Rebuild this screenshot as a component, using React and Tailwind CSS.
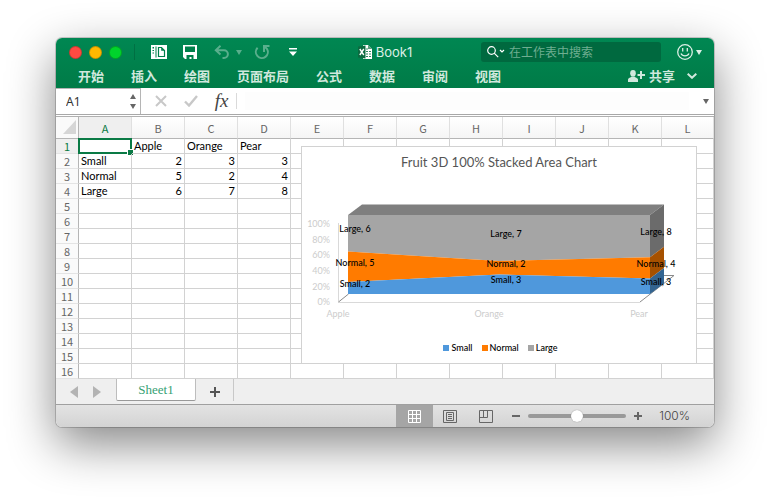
const COLUMNS = ["A", "B", "C", "D", "E", "F", "G", "H", "I", "J", "K", "L"];
const ROWS = Array.from({ length: 16 }, (_, i) => i + 1);
const DATA = {
  1: ["", "Apple", "Orange", "Pear"],
  2: ["Small", 2, 3, 3],
  3: ["Normal", 5, 2, 4],
  4: ["Large", 6, 7, 8],
};
const TABS = ["开始", "插入", "绘图", "页面布局", "公式", "数据", "审阅", "视图"];

function Light({ label, className }) {
  return (
    <button aria-label={label} className={"size-[13px] rounded-full border border-black/20 " + className} />
  );
}

function Caret({ className }) {
  return (
    <svg viewBox="0 0 6 5" className={"h-[5px] w-[6px] " + className} fill="currentColor">
      <path d="M0 0h6L3 5z" />
    </svg>
  );
}

function TitleBar() {
  return (
    <div className="grid h-7 grid-cols-[1fr_auto_1fr] items-center">
      <div className="flex items-center pl-[13px]">
        <div className="flex gap-[7px]">
          <Light label="关闭" className="bg-[#ff4a42]" />
          <Light label="最小化" className="bg-[#ffb800]" />
          <Light label="缩放" className="bg-[#00d42c]" />
        </div>
        <span className="ml-3 h-4 w-px bg-black/15" />
        <button aria-label="新建" className="ml-4">
          <svg viewBox="0 0 16 14" className="h-[14px] w-4">
            <path d="M0 0h16v14H0z" fill="#fff" />
            <path d="M1.500 2H3v1.500H1.500zM1.500 5H3v1H1.500zM1.500 7.500H3v1H1.500zM4.500 1.500h1v11h-1z" fill="#00804b" />
            <path d="M7.500 2.500v9h6V5.500l-3-3z" fill="none" stroke="#00804b" strokeWidth="1.200" />
            <path d="M10.200 2.500v3.300h3.300z" fill="#00804b" />
          </svg>
        </button>
        <button aria-label="保存" className="ml-4">
          <svg viewBox="0 0 14 14" className="size-[14px]">
            <path d="M0 0h14v14H2l-2-2z" fill="#fff" />
            <path d="M2 1.500h10v5.500H2zM3.500 10h7v4h-2v-2h-2v2h-3z" fill="#00804b" />
          </svg>
        </button>
        <button aria-label="撤销" className="ml-[17px] text-white/35">
          <svg viewBox="0 0 16 14" className="h-[14px] w-4" fill="none" stroke="currentColor" strokeWidth="2">
            <path d="M6.500 .8L1.800 5.200 6.500 9.600M2 5.200h8a3.900 3.900 0 0 1 0 7.800H8.500" />
          </svg>
        </button>
        <Caret className="ml-[6px] text-white/35" />
        <button aria-label="恢复" className="ml-3 text-white/35">
          <svg viewBox="0 0 16 16" className="size-4" fill="none" stroke="currentColor" strokeWidth="2">
            <path d="M3.600 3.800a6 6 0 1 0 9.300 1L10 2M15.500 2H10v6" />
          </svg>
        </button>
        <button aria-label="自定义" className="ml-[19px] text-white">
          <svg viewBox="0 0 8 8" className="size-2" fill="currentColor">
            <path d="M0 0h8v1.500H0zM0 3.500h8L4 8z" />
          </svg>
        </button>
      </div>
      <h1 className="flex items-center gap-1 font-[Inter,'Noto_Sans_CJK_SC',sans-serif] text-[13px] leading-4 text-[#dcefe6]">
        <svg viewBox="0 0 14 14" className="size-[14px]">
          <path d="M5 0h5l4 4v10H5z" fill="#fff" />
          <path d="M10 0v4h4z" fill="#5b9b7d" />
          <path d="M8 4h2M8 6.500h2M11 6.500h2M8 9h2M11 9h2M8 11.500h2M11 11.500h2" stroke="#2f8a61" />
          <path d="M0 1.500l7.500-1v13L0 12.500z" fill="#0b6b40" />
          <path d="M1.800 4l4 6M5.800 4l-4 6" stroke="#fff" strokeWidth="1.400" />
        </svg>
        Book1
      </h1>
      <div className="flex items-center justify-end pr-3">
        <label className="flex h-5 w-[180px] items-center rounded-[3px] bg-[#00693f] pl-[6px] text-white">
          <svg viewBox="0 0 18 12" className="h-3 w-[18px] shrink-0" fill="none" stroke="currentColor" strokeWidth="1.200">
            <circle cx="4.500" cy="4.500" r="3.800" />
            <path d="M7.200 7.200l4 4M13 4l2 2 2-2" />
          </svg>
          <input
            aria-label="搜索"
            placeholder="在工作表中搜索"
            className="ml-1 min-w-0 flex-1 bg-transparent text-xs leading-5 outline-none placeholder:text-[#6fae91]"
          />
        </label>
        <button aria-label="反馈" className="ml-4 flex items-center gap-[3px] text-[#dcefe6]">
          <svg viewBox="0 0 16 16" className="size-4" fill="none" stroke="currentColor" strokeWidth="1.300">
            <circle cx="8" cy="8" r="7.300" />
            <path d="M5.700 4v3.500M10.300 4v3.500M4 9.500c1.500 3.200 6.500 3.200 8 0" />
          </svg>
          <Caret className="" />
        </button>
      </div>
    </div>
  );
}

function RibbonTabs() {
  return (
    <div className="flex h-[22px] items-center justify-between pr-[17px] pb-[3px] pl-[22px] text-[13px] leading-5 font-bold text-[#d0e8dd]">
      <nav className="flex gap-[27px]">
        {TABS.map((t) => (
          <button key={t} className="whitespace-nowrap">{t}</button>
        ))}
      </nav>
      <div className="flex items-center gap-3">
        <button className="flex items-center gap-1">
          <svg viewBox="0 0 17 12" className="h-3 w-[17px]" fill="currentColor">
            <ellipse cx="5" cy="3.200" rx="2.800" ry="3.200" />
            <path d="M0 12V9.500C0 8 3 7.500 3.500 6.500h3C7 7.500 10 8 10 9.500V12zM12 1h2v3h3v2h-3v3h-2V6H9.500V4H12z" />
          </svg>
          共享
        </button>
        <button aria-label="折叠功能区">
          <svg viewBox="0 0 10 6" className="h-[6px] w-[10px]" fill="none" stroke="currentColor" strokeWidth="2">
            <path d="M.7.8L5 4.800 9.300.8" />
          </svg>
        </button>
      </div>
    </div>
  );
}

function FormulaBar() {
  return (
    <div className="flex h-[27px] items-stretch border-b border-[#a8a8a8] bg-white">
      <div className="flex w-[85px] items-center justify-between border-t border-r border-[#b5b5b5] pr-1 pl-[10px]">
        <input
          aria-label="名称框"
          defaultValue="A1"
          className="w-12 bg-transparent font-['Noto_Sans',sans-serif] text-xs text-[#333] outline-none"
        />
        <div className="flex flex-col gap-[5px] text-[#666]">
          <button aria-label="上一个"><Caret className="block rotate-180" /></button>
          <button aria-label="下一个"><Caret className="block" /></button>
        </div>
      </div>
      <div className="flex items-center pl-[14px] text-[#c8c8c8]">
        <button aria-label="取消">
          <svg viewBox="0 0 12 12" className="size-3" fill="none" stroke="currentColor" strokeWidth="2">
            <path d="M1 1l10 10M11 1L1 11" />
          </svg>
        </button>
        <button aria-label="输入" className="ml-[17px]">
          <svg viewBox="0 0 14 12" className="h-3 w-[14px]" fill="none" stroke="currentColor" strokeWidth="2.400">
            <path d="M1 6.500l4 4L13 1" />
          </svg>
        </button>
        <button className="ml-4 w-[15px] font-['Liberation_Serif',serif] text-[19px] leading-6 text-[#444] italic">fx</button>
        <span className="ml-[7px] h-4 w-px bg-[#dadada]" />
      </div>
      <input aria-label="编辑栏" className="my-1 ml-2 min-w-0 flex-1 bg-[#fdfdfd] outline-none" />
      <button aria-label="展开编辑栏" className="mr-[5px] ml-[14px] text-[#666]"><Caret className="" /></button>
    </div>
  );
}

function Cell({ row, col }) {
  const value = DATA[row]?.[col] ?? "";
  const selected = row === 1 && col === 0;
  return (
    <td
      className={
        "relative border-r border-b border-[#d2d2d2] px-[2px] " +
        (typeof value === "number" ? "text-right" : "text-left")
      }
    >
      {value}
      {selected && (
        <span className="absolute -top-px -right-px -bottom-px -left-px border-2 border-[#0a7a45]">
          <span className="absolute -right-[3px] -bottom-[3px] size-[5px] bg-[#0a7a45] outline outline-white" />
        </span>
      )}
    </td>
  );
}

/* Stack boundaries follow each category's share of its total: 2/7/13, 3/5/12 and 3/7/15. */
const LABELS = [
  ["Large, 6", 53, 85], ["Normal, 5", 53, 119], ["Small, 2", 53, 140],
  ["Large, 7", 204, 90], ["Normal, 2", 204, 120], ["Small, 3", 204, 136],
  ["Large, 8", 354, 88], ["Normal, 4", 354, 120], ["Small, 3", 354, 138],
];

function Chart() {
  return (
    <figure className="absolute top-[29px] left-[245px] h-[218px] w-[396px] border border-[#d2d2d2] bg-white font-[Lato,sans-serif]">
      <figcaption className="absolute inset-x-0 top-[7px] text-center text-[13px] leading-4 text-[#555]">
        Fruit 3D 100% Stacked Area Chart
      </figcaption>
      <svg viewBox="0 0 394 216" className="block h-[216px] w-[394px]">
        <path d="M36.500 76v79" stroke="#d9d9d9" />
        <path d="M36.500 155.500H338" stroke="#d9d9d9" />
        <path d="M36.500 155l10-8M338 155l34-26.500h-12" fill="none" stroke="#8a8a8a" />
        <path d="M46 68l14-10.500h302l-14 10.500z" fill="#7f7f7f" />
        <path d="M348 68l14-10.500v42.300L348 110.300z" fill="#6b6b6b" />
        <path d="M348 110.300l14-10.500v21.200L348 131.400z" fill="#a65100" />
        <path d="M348 131.400l14-10.400v15.500L348 147z" fill="#336490" />
        <path d="M46 68h302v42.300L197 114 46 104.600z" fill="#a5a5a5" />
        <path d="M46 104.600L197 114l151-3.700v21.100L197 127.500 46 135z" fill="#ff7b00" />
        <path d="M46 135l151-7.500 151 3.900V147H46z" fill="#4f98dc" />
        <g fontSize="9" fill="#cccccc">
          <g textAnchor="end">
            <text x="28" y="80">100%</text>
            <text x="28" y="96">80%</text>
            <text x="28" y="111">60%</text>
            <text x="28" y="127">40%</text>
            <text x="28" y="143">20%</text>
            <text x="28" y="158">0%</text>
          </g>
          <g textAnchor="middle">
            <text x="36" y="170">Apple</text>
            <text x="187" y="170">Orange</text>
            <text x="337" y="170">Pear</text>
          </g>
        </g>
        <g fontSize="9" fill="#000" fontWeight="500" textAnchor="middle">
          {LABELS.map(([text, x, y]) => (
            <text key={x + "-" + y} x={x} y={y}>{text}</text>
          ))}
        </g>
      </svg>
      <ul className="absolute inset-x-0 top-[195px] flex justify-center gap-[9px] pl-[3px] text-[9px] leading-3 font-medium text-black">
        <li className="flex items-center gap-[2px]"><span className="size-[6px] bg-[#4f98dc]" />Small</li>
        <li className="flex items-center gap-[2px]"><span className="size-[6px] bg-[#ff7b00]" />Normal</li>
        <li className="flex items-center gap-[2px]"><span className="size-[6px] bg-[#a5a5a5]" />Large</li>
      </ul>
    </figure>
  );
}

function Sheet() {
  return (
    <div className="relative mt-px overflow-hidden border-t border-[#b0b0b0] bg-white">
      <table className="w-full table-fixed border-separate border-spacing-0 font-[Lato,sans-serif] text-[11px] leading-[14px] text-black">
        <colgroup>
          <col className="w-[23px]" />
          {COLUMNS.map((c, i) => (
            <col key={c} className={i < 11 ? "w-[53px]" : ""} />
          ))}
        </colgroup>
        <thead>
          <tr className="h-[22px]">
            <th className="border-r border-b border-[#b5b5b5] bg-[#fafafa] p-0">
              <svg viewBox="0 0 15 15" className="ml-auto size-[15px]" fill="#d6d6d6">
                <path d="M13 0v14H0z" />
              </svg>
            </th>
            {COLUMNS.map((c, i) => (
              <th
                key={c}
                scope="col"
                className={
                  "border-r border-b border-r-[#e0e0e0] border-b-[#b5b5b5] p-0 font-['Noto_Sans_CJK_SC',sans-serif] text-[11px] font-normal " +
                  (i === 0 ? "bg-[#efefef] text-[#0a7a45]" : "bg-linear-to-b from-white to-[#f5f5f5] text-[#666]")
                }
              >
                {c}
              </th>
            ))}
          </tr>
        </thead>
        <tbody>
          {ROWS.map((r) => (
            <tr key={r} className="h-[15px]">
              <th
                scope="row"
                className={
                  "border-r border-b border-r-[#b5b5b5] border-b-[#e4e4e4] p-0 font-['Noto_Sans_CJK_SC',sans-serif] text-[11px] font-normal " +
                  (r === 1 ? "bg-[#efefef] text-[#0a7a45]" : "bg-[#fafafa] text-[#666]")
                }
              >
                {r}
              </th>
              {COLUMNS.map((c, i) => (
                <Cell key={c} row={r} col={i} />
              ))}
            </tr>
          ))}
        </tbody>
      </table>
      <Chart />
    </div>
  );
}

function SheetTabs() {
  return (
    <div className="flex h-[26px] items-start border-b border-[#a0a0a0] bg-[#efefef]">
      <div className="flex h-[26px] w-[60px] items-center gap-[15px] pl-[14px] text-[#b3b3b3]">
        <button aria-label="上一张工作表">
          <svg viewBox="0 0 8 12" className="h-3 w-2" fill="currentColor"><path d="M8 0v12L0 6z" /></svg>
        </button>
        <button aria-label="下一张工作表">
          <svg viewBox="0 0 8 12" className="h-3 w-2" fill="currentColor"><path d="M0 0v12l8-6z" /></svg>
        </button>
      </div>
      <button className="h-[22px] w-20 rounded-b-[2px] border border-t-0 border-[#bdbdbd] border-b-[#999] bg-white pt-px font-['Liberation_Serif',serif] text-[13px] leading-5 text-[#35a174]">
        Sheet1
      </button>
      <button aria-label="新建工作表" className="flex h-[25px] w-[37px] items-center justify-center text-[#555]">
        <svg viewBox="0 0 10 10" className="size-[10px]" stroke="currentColor" strokeWidth="2">
          <path d="M5 0v10M0 5h10" />
        </svg>
      </button>
      <span className="h-[22px] w-px bg-[#c8c8c8]" />
    </div>
  );
}

function StatusBar() {
  return (
    <footer className="flex h-[22px] items-center justify-end bg-linear-to-b from-[#e3e3e3] to-[#d3d3d3] pr-6 text-[#666]">
      <button aria-label="普通" className="flex h-full w-[37px] items-center justify-center bg-[#a5a5a5] text-white">
        <svg viewBox="0 0 13 13" className="size-[13px]" fill="none" stroke="currentColor">
          <path d="M.5.5h12v12H.5zM4.500 0v13M8.500 0v13M0 4.500h13M0 8.500h13" />
        </svg>
      </button>
      <button aria-label="页面布局" className="ml-[10px]">
        <svg viewBox="0 0 14 13" className="h-[13px] w-[14px]" fill="none" stroke="currentColor">
          <path d="M.5.5h13v12H.5zM3.500 2.500h7v8h-7zM5 4.500h4M5 6.500h4M5 8.500h4" />
        </svg>
      </button>
      <button aria-label="分页预览" className="ml-[22px]">
        <svg viewBox="0 0 14 13" className="h-[13px] w-[14px]" fill="none" stroke="currentColor">
          <path d="M.5.5h13v12H.5zM.5 7.500h8V.5M4.500.5v7" />
        </svg>
      </button>
      <button aria-label="缩小" className="ml-[19px]">
        <svg viewBox="0 0 8 8" className="size-2" stroke="currentColor" strokeWidth="2"><path d="M0 4h8" /></svg>
      </button>
      <input
        type="range"
        aria-label="缩放"
        className="ml-2 h-3 w-[98px] appearance-none bg-transparent [&::-webkit-slider-runnable-track]:h-1 [&::-webkit-slider-runnable-track]:rounded-full [&::-webkit-slider-runnable-track]:bg-[#999] [&::-webkit-slider-thumb]:-mt-1 [&::-webkit-slider-thumb]:size-3 [&::-webkit-slider-thumb]:appearance-none [&::-webkit-slider-thumb]:rounded-full [&::-webkit-slider-thumb]:bg-white [&::-webkit-slider-thumb]:shadow-[0_0_1px_#777]"
      />
      <button aria-label="放大" className="ml-2">
        <svg viewBox="0 0 8 8" className="size-2" stroke="currentColor" strokeWidth="2"><path d="M4 0v8M0 4h8" /></svg>
      </button>
      <span className="ml-[17px] font-[Inter,sans-serif] text-xs font-light text-[#444]">100%</span>
    </footer>
  );
}

export default function App() {
  return (
    <main className="bg-white px-14 pt-[38px] pb-[73px] font-['Noto_Sans_CJK_SC',sans-serif]">
      <section className="overflow-hidden rounded-[6px] bg-white shadow-[0_0_0_1px_rgba(0,0,0,0.18),0_17px_48px_rgba(0,0,0,0.48)]">
        <header className="bg-linear-to-b from-[#008752] to-[#007b47]">
          <TitleBar />
          <RibbonTabs />
        </header>
        <FormulaBar />
        <Sheet />
        <SheetTabs />
        <StatusBar />
      </section>
    </main>
  );
}
